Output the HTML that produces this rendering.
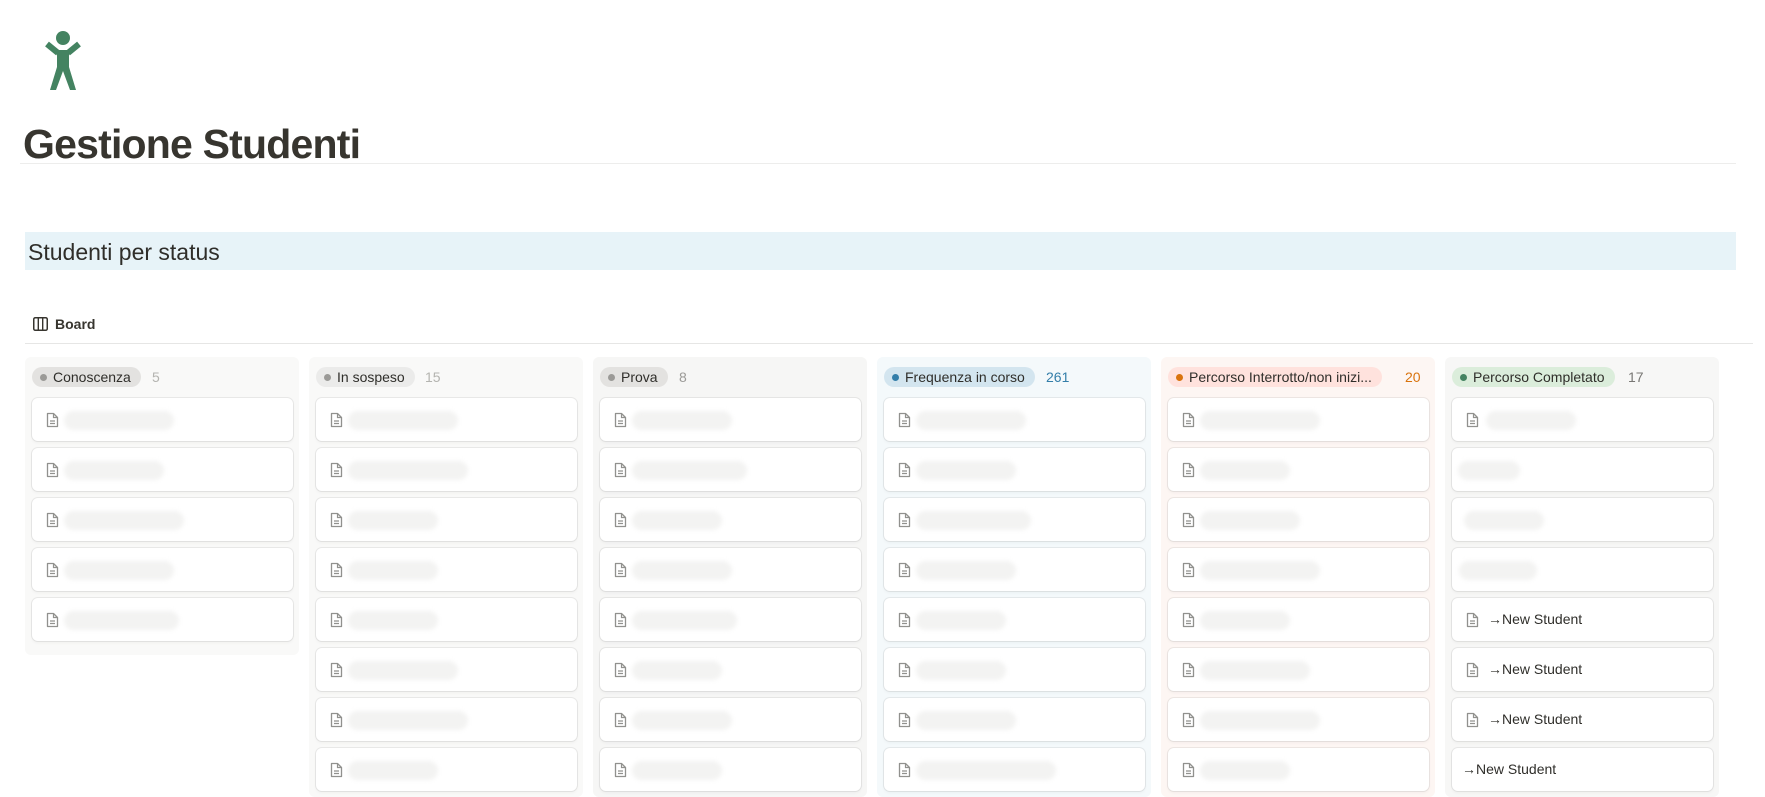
<!DOCTYPE html>
<html><head><meta charset="utf-8"><style>
*{margin:0;padding:0;box-sizing:border-box}
body{width:1765px;height:789px;overflow:hidden;background:#fff;font-family:"Liberation Sans",sans-serif;color:#37352f;position:relative}
.abs{position:absolute}
h1{position:absolute;left:23px;top:119px;font-size:41px;font-weight:bold;letter-spacing:-0.8px;color:#37352f;line-height:50px}
.band{position:absolute;left:25px;top:232px;width:1711px;height:38px;background:#e7f3f8}
.band span{position:absolute;left:3px;top:7px;font-size:23px;color:#2f2e2a}
.col{position:absolute;top:357px;width:274px;border-radius:6px;height:440px}
.hdr{position:absolute;left:7px;top:10px;height:20px;border-radius:10px;padding:0 10px 0 8px;font-size:14px;line-height:20px;white-space:nowrap;color:#2f2e2a}
.hdr i{display:inline-block;width:7px;height:7px;border-radius:50%;margin-right:6px;vertical-align:1px}
.cnt{position:absolute;top:10px;font-size:14px;line-height:20px}
.card{position:absolute;left:7px;width:261px;height:43px;background:#fff;border-radius:6px;box-shadow:0 0 0 1px rgba(15,15,15,.07),0 2px 3px rgba(15,15,15,.04)}
.doc{position:absolute;left:14px;top:14px}
.blob{position:absolute;top:13px;height:19px;border-radius:10px;background:#f3f3f2;filter:blur(2px)}
.txt{position:absolute;top:13px;font-size:14px;color:#2f2e2a}
</style></head><body>
<svg class="abs" style="left:40px;top:28px" width="46" height="64" viewBox="40 28 46 64">
<circle cx="63" cy="38" r="7" fill="#448361"/>
<path d="M47 44 L58 53 M79 44 L68 53" stroke="#448361" stroke-width="6" stroke-linecap="butt"/>
<path d="M57 50 L69 50 L69 67 L76 90 L70 90 L63 71 L56 90 L50 90 L57 67 Z" fill="#448361"/>
</svg>
<h1>Gestione Studenti</h1>
<div class="abs" style="left:20px;top:163px;width:1716px;height:1px;background:#ededec"></div>
<div class="band"><span>Studenti per status</span></div>
<svg class="abs" style="left:33px;top:317px" width="15" height="14" viewBox="0 0 15 14"><rect x="0.75" y="0.75" width="13.5" height="12.5" rx="1.5" fill="none" stroke="#37352f" stroke-width="1.5"/><line x1="5.3" y1="1" x2="5.3" y2="13" stroke="#37352f" stroke-width="1.4"/><line x1="9.7" y1="1" x2="9.7" y2="13" stroke="#37352f" stroke-width="1.4"/></svg>
<div class="abs" style="left:55px;top:316px;font-size:14px;font-weight:bold;color:#37352f">Board</div>
<div class="abs" style="left:25px;top:343px;width:1728px;height:1px;background:#e6e6e5"></div>

<div class="col" style="left:25px;background:#f9f9f8;height:298px">
<div class="hdr" style="background:#e3e2e0"><i style="background:#9b9a97"></i>Conoscenza</div>
<div class="cnt" style="left:127px;color:#b4b4b0">5</div>
</div>
<div class="col" style="left:309px;background:#f9f9f8">
<div class="hdr" style="background:#ebebea"><i style="background:#9b9a97"></i>In sospeso</div>
<div class="cnt" style="left:116px;color:#b4b4b0">15</div>
</div>
<div class="col" style="left:593px;background:#f6f6f5">
<div class="hdr" style="background:#e3e2e0"><i style="background:#9b9a97"></i>Prova</div>
<div class="cnt" style="left:86px;color:#9b9a97">8</div>
</div>
<div class="col" style="left:877px;background:#f4f9fb">
<div class="hdr" style="background:#d3e5ef"><i style="background:#337ea9"></i>Frequenza in corso</div>
<div class="cnt" style="left:169px;color:#337ea9">261</div>
</div>
<div class="col" style="left:1161px;background:#fdf6f3">
<div class="hdr" style="background:#ffe2dd"><i style="background:#d9730d"></i>Percorso Interrotto/non inizi...</div>
<div class="cnt" style="left:244px;color:#d9730d">20</div>
</div>
<div class="col" style="left:1445px;background:#f7f7f6">
<div class="hdr" style="background:#dbeddb"><i style="background:#448361"></i>Percorso Completato</div>
<div class="cnt" style="left:183px;color:#787774">17</div>
</div>

<div id="cards"></div>
<script>
var doc='<svg class="doc" width="13" height="16" viewBox="0 0 13 16"><path d="M1.5 1.5h6l4 4v9h-10z" fill="none" stroke="#91918e" stroke-width="1.3" stroke-linejoin="round"/><path d="M7.5 1.5v4h4M4 9h5M4 11.5h5" fill="none" stroke="#91918e" stroke-width="1.2"/></svg>';
var cols=[25,309,593,877,1161,1445];
var counts=[5,8,8,8,8,0];
var widths=[[110,100,120,110,115],[110,120,90,90,90,110,120,90],[100,115,90,100,105,90,100,90],[110,100,115,100,90,90,100,140],[120,90,100,120,90,110,120,90]];
var h='';
for(var c=0;c<5;c++){for(var i=0;i<counts[c];i++){h+='<div class="card" style="left:'+(cols[c]+7)+'px;top:'+(398+i*50)+'px">'+doc+'<div class="blob" style="left:32px;width:'+widths[c][i]+'px"></div></div>';}}
var x=cols[5]+7;
h+='<div class="card" style="left:'+x+'px;top:398px">'+doc+'<div class="blob" style="left:34px;width:90px"></div></div>';
h+='<div class="card" style="left:'+x+'px;top:448px"><div class="blob" style="left:6px;width:62px"></div></div>';
h+='<div class="card" style="left:'+x+'px;top:498px"><div class="blob" style="left:12px;width:80px"></div></div>';
h+='<div class="card" style="left:'+x+'px;top:548px"><div class="blob" style="left:7px;width:78px"></div></div>';
for(var i=0;i<3;i++){h+='<div class="card" style="left:'+x+'px;top:'+(598+i*50)+'px">'+doc+'<div class="txt" style="left:36px">→New Student</div></div>';}
h+='<div class="card" style="left:'+x+'px;top:748px"><div class="txt" style="left:10px">→New Student</div></div>';
document.getElementById('cards').innerHTML=h;
</script>
</body></html>
